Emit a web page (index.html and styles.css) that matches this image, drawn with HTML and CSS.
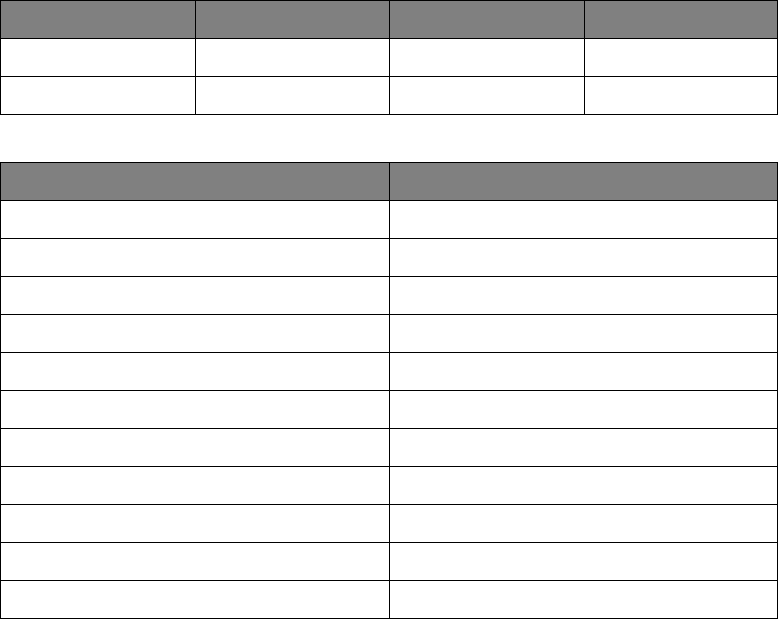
FILE: index.html
```html
<!DOCTYPE html>
<html>
<head>
<meta charset="utf-8">
<link rel="stylesheet" href="styles.css">
</head>
<body>
<table class="grid grid-four">
  <colgroup>
    <col class="c-a"><col class="c-b"><col class="c-a"><col class="c-d">
  </colgroup>
  <thead>
    <tr><th></th><th></th><th></th><th></th></tr>
  </thead>
  <tbody>
    <tr><td></td><td></td><td></td><td></td></tr>
    <tr><td></td><td></td><td></td><td></td></tr>
  </tbody>
</table>
<table class="grid grid-two">
  <colgroup>
    <col class="c-half-a"><col class="c-half-b">
  </colgroup>
  <thead>
    <tr><th></th><th></th></tr>
  </thead>
  <tbody>
    <tr><td></td><td></td></tr>
    <tr><td></td><td></td></tr>
    <tr><td></td><td></td></tr>
    <tr><td></td><td></td></tr>
    <tr><td></td><td></td></tr>
    <tr><td></td><td></td></tr>
    <tr><td></td><td></td></tr>
    <tr><td></td><td></td></tr>
    <tr><td></td><td></td></tr>
    <tr><td></td><td></td></tr>
    <tr><td></td><td></td></tr>
  </tbody>
</table>
</body>
</html>
```
FILE: styles.css
```css
html, body {
  margin: 0;
  padding: 0;
  background: #ffffff;
  font-family: "Liberation Sans", Arial, sans-serif;
}
.grid {
  border-collapse: collapse;
  table-layout: fixed;
  width: 777px;
}
.c-a { width: 195px; }
.c-b { width: 194px; }
.c-d { width: 193px; }
.c-half-a { width: 389px; }
.c-half-b { width: 388px; }
.grid th,
.grid td {
  border: 1px solid #000000;
  padding: 0;
  height: 37px;
}
.grid th {
  background: #808080;
}
.grid-two {
  margin-top: 47px;
}
```
